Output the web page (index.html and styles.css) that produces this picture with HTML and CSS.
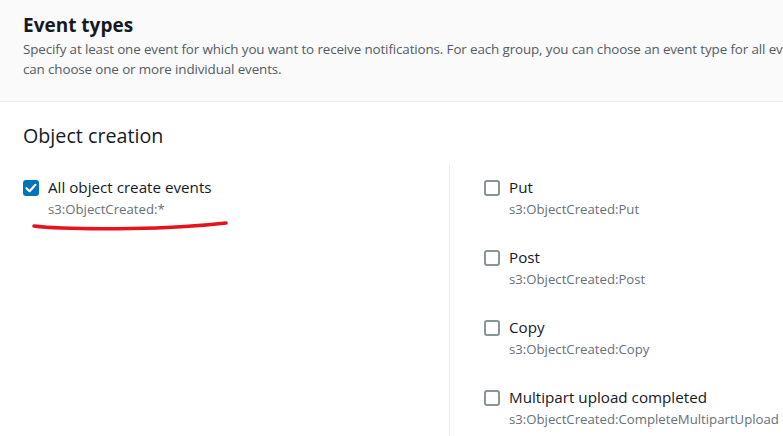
FILE: index.html
```html
<!DOCTYPE html>
<html>
<head>
<meta charset="utf-8">
<link rel="stylesheet" href="styles.css">
</head>
<body>
<div class="header">
  <h2 class="title">Event types</h2>
  <p class="desc">Specify at least one event for which you want to receive notifications. For each group, you can choose an event type for all events, or you can choose one or more individual events.</p>
</div>
<div class="section">
  <h3 class="group-title">Object creation</h3>
  <div class="columns">
    <div class="col left">
      <label class="opt">
        <span class="box checked"><svg viewBox="0 0 16 16" width="16" height="16"><path d="M3.5 8.2 L6.6 11.2 L12.5 4.8" fill="none" stroke="#fff" stroke-width="2.2" stroke-linecap="round" stroke-linejoin="round"/></svg></span>
        <span class="text"><span class="name">All object create events</span><span class="code">s3:ObjectCreated:*</span></span>
      </label>
      <svg class="scribble" width="240" height="20" viewBox="0 0 240 20"><path d="M34 9 C 50 11, 90 12, 130 11.5 C 170 11, 200 9, 226 6" fill="none" stroke="#e3141d" stroke-width="3.6" stroke-linecap="round"/></svg>
    </div>
    <div class="col right">
      <label class="opt"><span class="box"></span><span class="text"><span class="name">Put</span><span class="code">s3:ObjectCreated:Put</span></span></label>
      <label class="opt"><span class="box"></span><span class="text"><span class="name">Post</span><span class="code">s3:ObjectCreated:Post</span></span></label>
      <label class="opt"><span class="box"></span><span class="text"><span class="name">Copy</span><span class="code">s3:ObjectCreated:Copy</span></span></label>
      <label class="opt"><span class="box"></span><span class="text"><span class="name">Multipart upload completed</span><span class="code">s3:ObjectCreated:CompleteMultipartUpload</span></span></label>
    </div>
  </div>
</div>
</body>
</html>
```
FILE: styles.css
```css
html, body {
  margin: 0;
  padding: 0;
  background: #ffffff;
  font-family: "Open Sans", "Noto Sans", sans-serif;
  color: #16191f;
  overflow: hidden;
}
.header {
  background: #fafafa;
  border-bottom: 1px solid #eaeded;
  padding: 13px 0 0 23px;
  height: 88px;
  box-sizing: content-box;
  overflow: hidden;
}
.title {
  margin: 0;
  font-size: 19px;
  font-weight: 700;
  line-height: 24px;
}
.desc {
  margin: 2px 0 0 0;
  font-size: 13.4px;
  line-height: 20px;
  color: #545b64;
  width: 845px;
  letter-spacing: -0.12px;
}
.section {
  padding: 20px 0 0 23px;
}
.group-title {
  margin: 0;
  font-size: 19.7px;
  font-weight: 400;
  line-height: 28px;
}
.columns {
  display: grid;
  grid-template-columns: 426px 1fr;
  margin-top: 15px;
}
.col.left {
  position: relative;
  padding-top: 14px;
}
.col.right {
  border-left: 1px solid #eaeded;
  padding: 14px 0 0 34px;
  display: flex;
  flex-direction: column;
  gap: 32px;
  height: 300px;
}
.opt {
  display: flex;
  align-items: flex-start;
  gap: 9px;
}
.box {
  width: 16px;
  height: 16px;
  box-sizing: border-box;
  border: 2px solid #879596;
  border-radius: 3px;
  margin-top: 1px;
  flex: none;
  display: flex;
}
.box.checked {
  background: #0073bb;
  border-color: #0073bb;
}
.box.checked svg {
  margin: -2px;
}
.text {
  display: flex;
  flex-direction: column;
}
.name {
  font-size: 15.2px;
  line-height: 16px;
  color: #16191f;
}
.code {
  font-size: 13.2px;
  line-height: 16px;
  margin-top: 6px;
  color: #687078;
}
.scribble {
  position: absolute;
  left: -23px;
  top: 52px;
}
```
